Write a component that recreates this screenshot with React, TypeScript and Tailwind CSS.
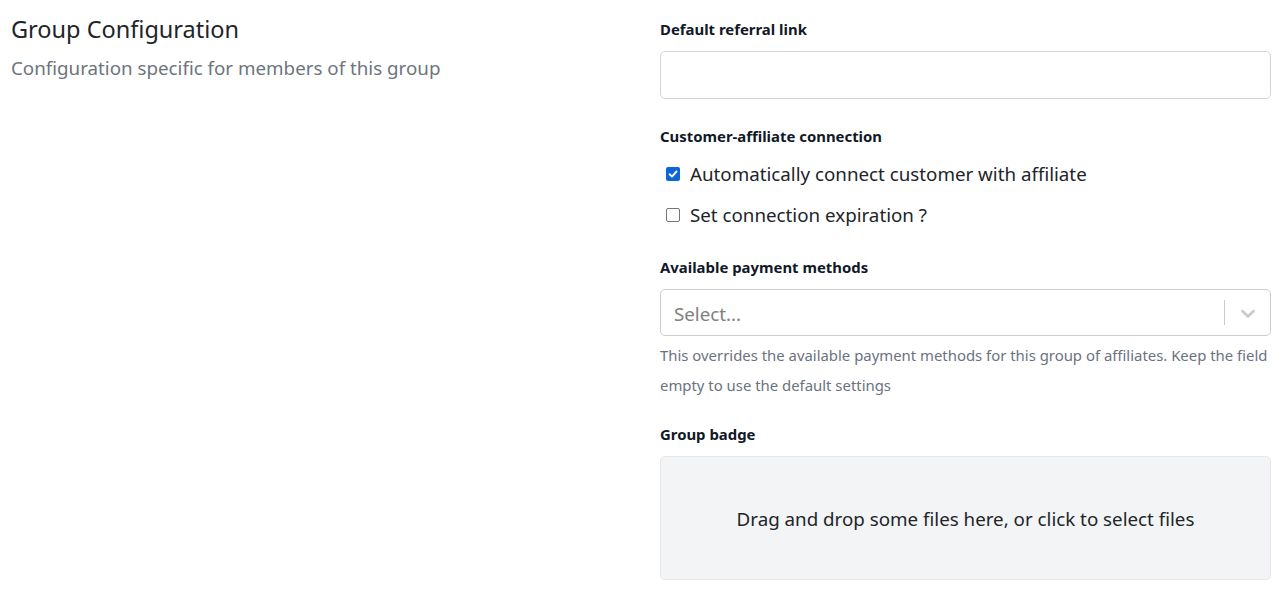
import { useState } from "react";

function Check({ checked }: { checked: boolean }) {
	return checked ? (
		<span className="flex h-[14px] w-[14px] items-center justify-center rounded-[2px] bg-[#0b67d8]">
			<svg viewBox="0 0 12 12" className="h-[12px] w-[12px]">
				<path d="M2.6 6.3 5 8.6 9.5 3.5" fill="none" stroke="white" strokeWidth="1.9" strokeLinecap="round" strokeLinejoin="round" />
			</svg>
		</span>
	) : (
		<span className="block h-[14px] w-[14px] rounded-[2px] border border-[#767676] bg-white" />
	);
}

export default function App() {
	const [auto, setAuto] = useState(true);
	const [expire, setExpire] = useState(false);

	return (
		<div className="flex min-h-[591px] bg-white px-[11px] pt-[12px] font-['Noto_Sans',sans-serif] text-[#212529]">
			<div className="flex-1">
				<h2 className="text-[23.5px] leading-[34px]">Group Configuration</h2>
				<p className="mt-[9px] text-[18.75px] leading-[26px] text-[#6c757d]">Configuration specific for members of this group</p>
			</div>

			<div className="w-[611px] pt-[7px]">
				<label className="block text-[14.9px] font-bold leading-[20px] text-[#111827]">Default referral link</label>
				<input className="mt-[12px] block h-[48px] w-full rounded-[5px] border border-[#d1d5db] px-3 outline-none" />

				<div className="mt-[27px] text-[14.9px] font-bold leading-[20px] text-[#111827]">Customer-affiliate connection</div>
				<div className="mt-[15px] flex flex-col gap-[15px]">
					<button className="flex items-center gap-[10px] pl-[6px] text-left" onClick={() => setAuto(!auto)}>
						<Check checked={auto} />
						<span className="text-[18.75px] leading-[26px] text-[#212529]">Automatically connect customer with affiliate</span>
					</button>
					<button className="flex items-center gap-[10px] pl-[6px] text-left" onClick={() => setExpire(!expire)}>
						<Check checked={expire} />
						<span className="text-[18.75px] leading-[26px] text-[#212529]">Set connection expiration ?</span>
					</button>
				</div>

				<div className="mt-[29px] text-[14.9px] font-bold leading-[20px] text-[#111827]">Available payment methods</div>
				<div className="mt-[12px] flex h-[47px] items-center rounded-[5px] border border-[#cccccc] bg-white">
					<span className="flex-1 pl-[13px] pt-[3px] text-[18.75px] text-[#808080]">Select...</span>
					<span className="h-[25px] w-px bg-[#cccccc]" />
					<span className="flex w-[45px] items-center justify-center">
						<svg viewBox="0 0 20 20" className="h-[24px] w-[24px] fill-[#cccccc]">
							<path d="M4.516 7.548c.436-.446 1.043-.481 1.576 0L10 11.295l3.908-3.747c.533-.481 1.141-.446 1.574 0 .436.445.408 1.197 0 1.615-.406.418-4.695 4.502-4.695 4.502a1.095 1.095 0 0 1-1.576 0S4.924 9.581 4.516 9.163c-.409-.418-.436-1.17 0-1.615z" />
						</svg>
					</span>
				</div>
				<p className="mt-[4px] text-[14.9px] leading-[30px] text-[#6b7280]">
					This overrides the available payment methods for this group of affiliates. Keep the field empty to use the default settings
				</p>

				<div className="mt-[24px] text-[14.9px] font-bold leading-[20px] text-[#111827]">Group badge</div>
				<div className="mt-[12px] flex h-[124px] items-center justify-center rounded-[5px] border border-[#e5e7eb] bg-[#f3f4f6]">
					<span className="pt-[2px] text-[18.75px] text-[#212529]">Drag and drop some files here, or click to select files</span>
				</div>
			</div>
		</div>
	);
}
